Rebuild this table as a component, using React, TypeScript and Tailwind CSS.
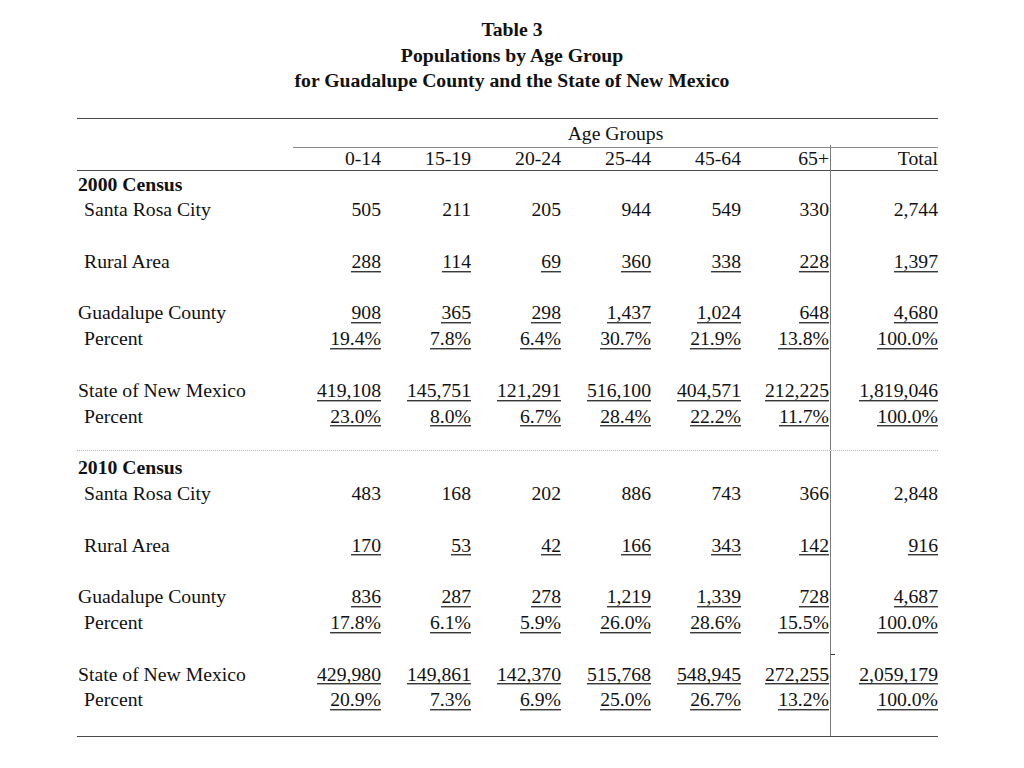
import React from "react";

type Row =
  | { kind: "head"; label: string }
  | { kind: "data"; label: string; indent?: boolean; vals: string[]; ul?: boolean }
  | { kind: "blank"; tick?: boolean }
  | { kind: "dotted" };

const rows: Row[] = [
  { kind: "head", label: "2000 Census" },
  { kind: "data", label: "Santa Rosa City", indent: true, vals: ["505", "211", "205", "944", "549", "330", "2,744"] },
  { kind: "blank" },
  { kind: "data", label: "Rural Area", indent: true, vals: ["288", "114", "69", "360", "338", "228", "1,397"], ul: true },
  { kind: "blank" },
  { kind: "data", label: "Guadalupe County", vals: ["908", "365", "298", "1,437", "1,024", "648", "4,680"], ul: true },
  { kind: "data", label: "Percent", indent: true, vals: ["19.4%", "7.8%", "6.4%", "30.7%", "21.9%", "13.8%", "100.0%"], ul: true },
  { kind: "blank" },
  { kind: "data", label: "State of New Mexico", vals: ["419,108", "145,751", "121,291", "516,100", "404,571", "212,225", "1,819,046"], ul: true },
  { kind: "data", label: "Percent", indent: true, vals: ["23.0%", "8.0%", "6.7%", "28.4%", "22.2%", "11.7%", "100.0%"], ul: true },
  { kind: "dotted" },
  { kind: "head", label: "2010 Census" },
  { kind: "data", label: "Santa Rosa City", indent: true, vals: ["483", "168", "202", "886", "743", "366", "2,848"] },
  { kind: "blank" },
  { kind: "data", label: "Rural Area", indent: true, vals: ["170", "53", "42", "166", "343", "142", "916"], ul: true },
  { kind: "blank" },
  { kind: "data", label: "Guadalupe County", vals: ["836", "287", "278", "1,219", "1,339", "728", "4,687"], ul: true },
  { kind: "data", label: "Percent", indent: true, vals: ["17.8%", "6.1%", "5.9%", "26.0%", "28.6%", "15.5%", "100.0%"], ul: true },
  { kind: "blank", tick: true },
  { kind: "data", label: "State of New Mexico", vals: ["429,980", "149,861", "142,370", "515,768", "548,945", "272,255", "2,059,179"], ul: true },
  { kind: "data", label: "Percent", indent: true, vals: ["20.9%", "7.3%", "6.9%", "25.0%", "26.7%", "13.2%", "100.0%"], ul: true },
];

const grid = "grid grid-cols-[216px_88px_90px_90px_90px_90px_90px_107px]";

function Val({ v, ul }: { v: string; ul?: boolean }) {
  if (!ul) return <span>{v}</span>;
  return (
    <span className="inline-block leading-[0.9] border-b border-[#3a3a3a] shadow-[0_1px_0_#a8a8a8]">
      {v}
    </span>
  );
}

function Cells({ vals, ul }: { vals?: string[]; ul?: boolean }) {
  const v = vals ?? ["", "", "", "", "", "", ""];
  return (
    <>
      {v.map((x, i) => (
        <div
          key={i}
          className={
            "text-right whitespace-nowrap " + (i === 5 ? "border-r border-[#7a7a7a] pr-[1px]" : "")
          }
        >
          {x && <Val v={x} ul={ul} />}
        </div>
      ))}
    </>
  );
}

export default function App() {
  return (
    <div
      className="w-[1024px] h-[768px] bg-white text-[#111] text-[19.7px]"
      style={{ fontFamily: '"Liberation Serif", "Times New Roman", serif' }}
    >
      <div className="pt-[17px] flex flex-col items-center font-bold leading-[25.5px]">
        <div>Table 3</div>
        <div>Populations by Age Group</div>
        <div>for Guadalupe County and the State of New Mexico</div>
      </div>

      <div className="ml-[77px] mt-[24px] w-[861px] border-t border-[#4a4a4a]">
        {/* Age Groups row */}
        <div className={grid + " h-[26px] leading-[28px]"}>
          <div />
          <div className="col-span-7 text-center border-b border-[#8a8a8a]">Age Groups</div>
        </div>
        {/* header row */}
        <div className={grid + " h-[26px] leading-[27px] border-b border-[#4a4a4a]"}>
          <div />
          {["0-14", "15-19", "20-24", "25-44", "45-64", "65+", "Total"].map((h, i) => (
            <div
              key={h}
              className={"text-right " + (i === 5 ? "border-r border-[#7a7a7a] pr-[1px]" : "")}
            >
              {h}
            </div>
          ))}
        </div>

        {rows.map((r, idx) => {
          if (r.kind === "head") {
            return (
              <div key={idx} className={grid + " h-[25.8px] leading-[27.6px]"}>
                <div className="pl-[1px] font-bold whitespace-nowrap">{r.label}</div>
                <Cells />
              </div>
            );
          }
          if (r.kind === "data") {
            return (
              <div key={idx} className={grid + " h-[25.8px] leading-[27.6px]"}>
                <div className={"whitespace-nowrap " + (r.indent ? "pl-[7px]" : "pl-[1px]")}>{r.label}</div>
                <Cells vals={r.vals} ul={r.ul} />
              </div>
            );
          }
          if (r.kind === "dotted") {
            return (
              <div key={idx} className="h-[25.8px] flex flex-col">
                <div className={grid + " h-[23px] border-b border-dotted border-[#b5b5b5]"}>
                  <div />
                  <Cells />
                </div>
                <div className={grid + " flex-1"}>
                  <div />
                  <Cells />
                </div>
              </div>
            );
          }
          return (
            <div key={idx} className={grid + " h-[25.8px]"}>
              <div />
              {[0, 1, 2, 3, 4].map((i) => (
                <div key={i} />
              ))}
              <div className="border-r border-[#7a7a7a]" />
              <div className="flex items-start">
                {r.tick && <div className="mt-[19px] w-[4px] h-[1px] bg-[#333]" />}
              </div>
            </div>
          );
        })}

        {/* trailing blank row to bottom rule */}
        <div className={grid + " h-[24.4px] border-b border-[#4a4a4a]"}>
          <div />
          {[0, 1, 2, 3, 4].map((i) => (
            <div key={i} />
          ))}
          <div className="border-r border-[#7a7a7a]" />
          <div />
        </div>
      </div>
    </div>
  );
}
